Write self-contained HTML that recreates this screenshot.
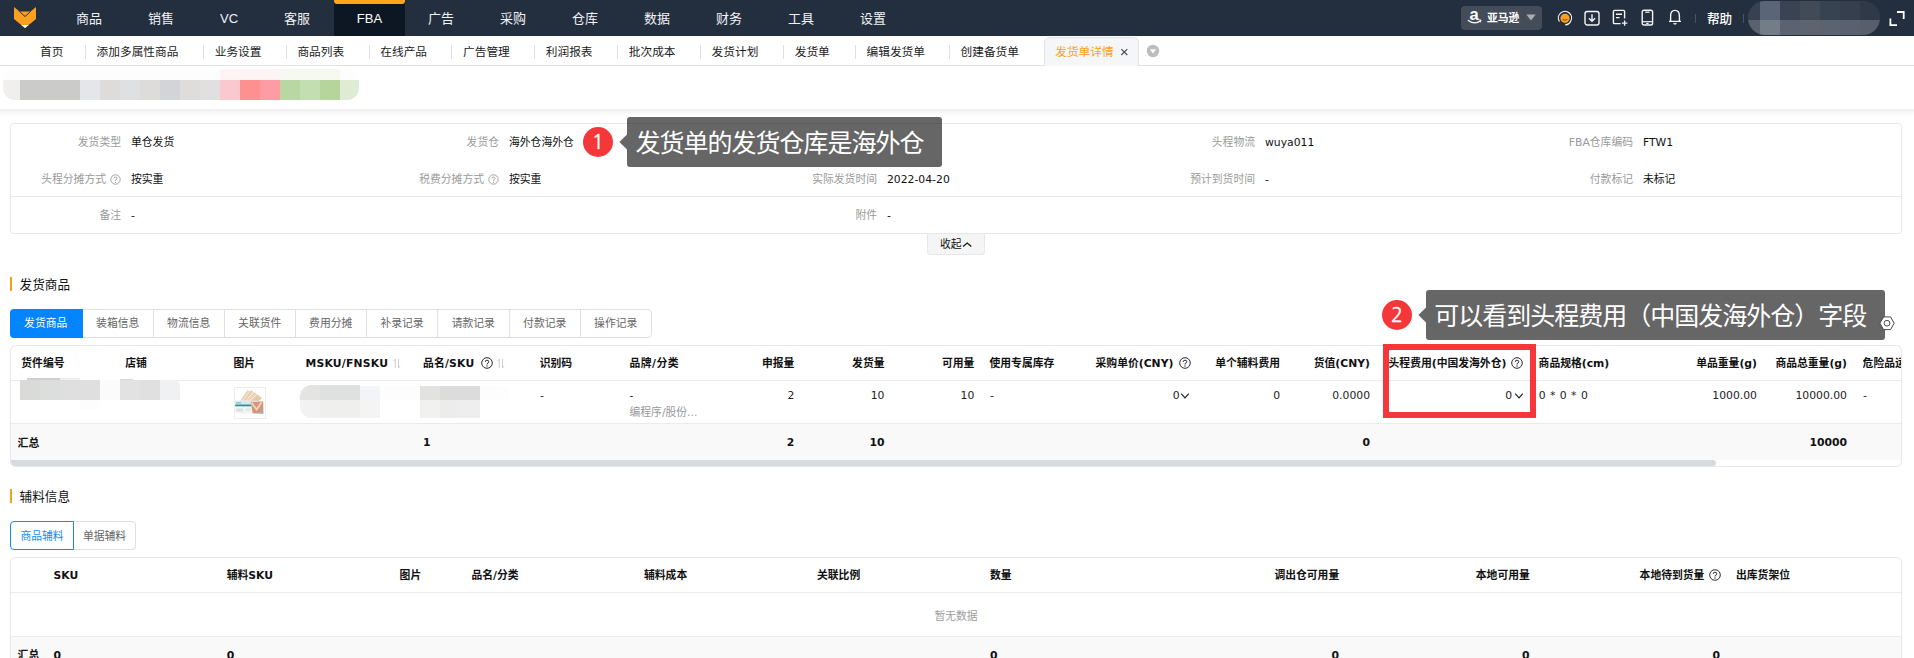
<!DOCTYPE html>
<html lang="zh-CN">
<head>
<meta charset="utf-8">
<title>发货单详情</title>
<style>
*{box-sizing:border-box;margin:0;padding:0}
html,body{width:1914px;height:658px;overflow:hidden;background:#fff}
body{font-family:"Liberation Sans","Noto Sans CJK SC",sans-serif;color:#111;position:relative}
#app{position:absolute;left:0;top:0;width:1914px;height:658px;overflow:hidden;background:#fff}
.a{position:absolute}
.t{position:absolute;white-space:nowrap;height:20px;line-height:20px}
.r{text-align:right}
.v{font-family:"DejaVu Sans","Noto Sans CJK SC",sans-serif}
/* top nav */
#nav{position:absolute;left:0;top:0;width:1914px;height:36px;background:#232e3f}
#nav .m{position:absolute;top:0;height:36px;line-height:37px;text-align:center;color:#f2f3f5;font-size:13px;width:72px}
#nav .m.on{background:#0d1723;color:#fff}
#nav .m.on:before{content:"";position:absolute;left:0;top:0;width:100%;height:4px;background:#fea41f;border-radius:0 0 3px 3px}
/* tab bar */
#tabs{position:absolute;left:0;top:36px;width:1914px;height:30px;background:#fff;border-bottom:1px solid #dfe2e8}
#tabs .t{font-size:11.7px;top:6px;color:#1a1a1a}
#tabs .s{position:absolute;top:8.5px;width:1px;height:14px;background:#dcdfe6}
/* info card */
.lb,.vl,.h,.d{font-family:"DejaVu Sans","Noto Sans CJK SC",sans-serif}
.lb{font-size:10.8px;color:#9a9a9a;text-align:right}
.vl{font-size:10.8px;color:#111}
.h{font-size:10.8px;font-weight:bold;color:#111}
.d{font-size:10.8px;color:#222}
.st{top:310px;width:1px;height:27px;background:#dcdfe6}
.sb{top:313px;width:71px;margin-left:-.8px;text-align:center;font-size:10.8px;color:#666}
.tip{height:49.6px;border-radius:3px;background:rgba(0,0,0,.6);color:#fff;font-size:25px;letter-spacing:-1px;line-height:52.5px;white-space:nowrap;overflow:hidden}
.card{position:absolute;border:1px solid #e4e7ed;border-radius:3.5px;background:#fff}
</style>
</head>
<body>
<div id="app">

<!-- ===== top navigation ===== -->
<div id="nav">
  <svg class="a" style="left:13px;top:6px" width="24" height="24" viewBox="0 0 24 24">
    <path d="M1 1 L6.5 5.5 L17.5 5.5 L23 1 L23 13 L12 22 L1 13 Z" fill="#f9a01e"/>
    <path d="M6.5 5.5 L12 10.5 L17.5 5.5" fill="none" stroke="#232e3f" stroke-width="1"/>
    <path d="M8.2 18.9 L12 22 L15.8 18.9 Z" fill="#fff"/>
  </svg>
  <div class="m" style="left:53px">商品</div>
  <div class="m" style="left:125px">销售</div>
  <div class="m" style="left:197px;width:64px">VC</div>
  <div class="m" style="left:261px">客服</div>
  <div class="m on" style="left:334px;width:71px">FBA</div>
  <div class="m" style="left:405px">广告</div>
  <div class="m" style="left:477px">采购</div>
  <div class="m" style="left:549px">仓库</div>
  <div class="m" style="left:621px">数据</div>
  <div class="m" style="left:693px">财务</div>
  <div class="m" style="left:765px">工具</div>
  <div class="m" style="left:837px">设置</div>
  <div class="a" style="left:1461px;top:6px;width:81px;height:24px;background:#444c59;border-radius:4px"></div>
  <div class="a" style="left:1469.5px;top:4px;width:12px;height:20px;line-height:20px;font-size:16.5px;font-weight:bold;color:#fff;font-family:'Liberation Sans',sans-serif">a</div>
  <svg class="a" style="left:1467px;top:18px" width="16" height="8" viewBox="0 0 16 8">
    <path d="M1.3 2.4 Q7.4 7 13.4 2.9" fill="none" stroke="#fff" stroke-width="1.2" stroke-linecap="round"/>
    <path d="M11.6 1.9 L14 2 L13.4 4.4" fill="none" stroke="#fff" stroke-width="0.9"/>
  </svg>
  <div class="t" style="left:1487px;top:8px;font-size:10.8px;color:#fff;font-weight:bold">亚马逊</div>
  <svg class="a" style="left:1526px;top:14px" width="10" height="7" viewBox="0 0 10 7"><path d="M0.3 0.6 L9.7 0.6 L5 6.6 Z" fill="#a9acb2"/></svg>
  <!-- headset -->
  <svg class="a" style="left:1556px;top:9px" width="18" height="18" viewBox="0 0 18 18">
    <path d="M3.2 12.2 A6.6 6.6 0 1 1 14.6 12.4 Q13 15.6 9.6 15.8" fill="none" stroke="#f4f5f7" stroke-width="1.2" stroke-linecap="round"/>
    <circle cx="9" cy="9.3" r="4.6" fill="#f9a01e"/>
    <path d="M7 10.6 Q9 12.2 11 10.6" fill="none" stroke="#6b4a12" stroke-width="0.9" stroke-linecap="round"/>
  </svg>
  <!-- download -->
  <svg class="a" style="left:1584px;top:10px" width="16" height="16" viewBox="0 0 16 16">
    <rect x="1" y="1.5" width="14" height="13.5" rx="2.2" fill="none" stroke="#f4f5f7" stroke-width="1.4"/>
    <path d="M8 4.2 V11 M4.9 8.2 L8 11.3 L11.1 8.2" fill="none" stroke="#f4f5f7" stroke-width="1.4"/>
  </svg>
  <!-- doc plus -->
  <svg class="a" style="left:1612px;top:9px" width="17" height="18" viewBox="0 0 17 18">
    <path d="M12.6 9.5 V2.6 Q12.6 1.4 11.4 1.4 H2.6 Q1.4 1.4 1.4 2.6 V13.4 Q1.4 14.6 2.6 14.6 H8.6" fill="none" stroke="#f4f5f7" stroke-width="1.4"/>
    <path d="M4 5.3 H10 M4 8.6 H7.6" stroke="#f4f5f7" stroke-width="1.4" fill="none"/>
    <path d="M12.6 11.4 V16.8 M9.9 14.1 H15.3" stroke="#f4f5f7" stroke-width="1.3" fill="none"/>
  </svg>
  <!-- phone -->
  <svg class="a" style="left:1641px;top:9px" width="13" height="18" viewBox="0 0 13 18">
    <rect x="1.2" y="1.2" width="10.4" height="14.8" rx="1.8" fill="none" stroke="#f4f5f7" stroke-width="1.4"/>
    <path d="M1.2 12.7 H11.6" stroke="#f4f5f7" stroke-width="1.2"/>
    <path d="M4.2 3.2 H8.6" stroke="#f4f5f7" stroke-width="1.2"/>
    <path d="M5.2 14.5 H7.6" stroke="#f4f5f7" stroke-width="1.2"/>
  </svg>
  <!-- bell -->
  <svg class="a" style="left:1668px;top:7.8px" width="14" height="18" viewBox="0 0 14 18">
    <path d="M2.6 13.2 V8 Q2.6 2.4 7 2.4 Q11.4 2.4 11.4 8 V13.2 M1 13.4 H13" fill="none" stroke="#f4f5f7" stroke-width="1.4" stroke-linejoin="round"/>
    <path d="M5.6 15.2 Q7 16.6 8.4 15.2" fill="none" stroke="#f4f5f7" stroke-width="1.3"/>
  </svg>
  <div class="a" style="left:1695px;top:14px;width:1px;height:9px;background:#4a5362"></div>
  <div class="t" style="left:1707px;top:8.5px;font-size:12.6px;color:#fff;font-weight:500">帮助</div>
  <div class="a" style="left:1743px;top:14px;width:1px;height:9px;background:#4a5362"></div>
  <!-- blurred user -->
  <div class="a" style="left:1748px;top:1px;width:132px;height:34px;border-radius:17px;overflow:hidden;background:#3a4352">
    <div class="a" style="left:0;top:0;width:12px;height:19px;background:#37414f"></div>
    <div class="a" style="left:12px;top:0;width:20px;height:19px;background:#5a6677"></div>
    <div class="a" style="left:32px;top:0;width:20px;height:19px;background:#3a4352"></div>
    <div class="a" style="left:52px;top:0;width:20px;height:19px;background:#414a55"></div>
    <div class="a" style="left:72px;top:0;width:20px;height:19px;background:#384352"></div>
    <div class="a" style="left:92px;top:0;width:20px;height:19px;background:#353f4e"></div>
    <div class="a" style="left:112px;top:0;width:20px;height:19px;background:#2f3948"></div>
    <div class="a" style="left:0;top:19px;width:12px;height:15px;background:#5a6270"></div>
    <div class="a" style="left:12px;top:19px;width:20px;height:15px;background:#737d88"></div>
    <div class="a" style="left:32px;top:19px;width:20px;height:15px;background:#5c6370"></div>
    <div class="a" style="left:52px;top:19px;width:20px;height:15px;background:#5d6470"></div>
    <div class="a" style="left:72px;top:19px;width:20px;height:15px;background:#5b6370"></div>
    <div class="a" style="left:92px;top:19px;width:20px;height:15px;background:#596170"></div>
    <div class="a" style="left:112px;top:19px;width:20px;height:15px;background:#575f6c"></div>
  </div>
  <!-- fullscreen -->
  <svg class="a" style="left:1889px;top:10px" width="17" height="17" viewBox="0 0 17 17">
    <path d="M8 2 H14.7 V9" fill="none" stroke="#fff" stroke-width="1.8"/>
    <path d="M1.4 8.6 V15.1 H8" fill="none" stroke="#fff" stroke-width="1.8"/>
  </svg>
</div>

<!-- ===== page tabs ===== -->
<div id="tabs">
  <div class="t" style="left:40px">首页</div>
  <div class="s" style="left:85px"></div>
  <div class="t" style="left:96.6px">添加多属性商品</div>
  <div class="s" style="left:203px"></div>
  <div class="t" style="left:214.7px">业务设置</div>
  <div class="s" style="left:286px"></div>
  <div class="t" style="left:297.4px">商品列表</div>
  <div class="s" style="left:369px"></div>
  <div class="t" style="left:380.3px">在线产品</div>
  <div class="s" style="left:451px"></div>
  <div class="t" style="left:463px">广告管理</div>
  <div class="s" style="left:534px"></div>
  <div class="t" style="left:545.8px">利润报表</div>
  <div class="s" style="left:617px"></div>
  <div class="t" style="left:628.8px">批次成本</div>
  <div class="s" style="left:700px"></div>
  <div class="t" style="left:711.6px">发货计划</div>
  <div class="s" style="left:783px"></div>
  <div class="t" style="left:794.7px">发货单</div>
  <div class="s" style="left:855px"></div>
  <div class="t" style="left:866.5px">编辑发货单</div>
  <div class="s" style="left:949px"></div>
  <div class="t" style="left:960.5px">创建备货单</div>
  <div class="a" style="left:1044px;top:1px;width:95px;height:29px;background:#f5f6f8;border:1px solid #e0e3e8;border-bottom:none;border-radius:5.5px 5.5px 0 0"></div>
  <div class="t" style="left:1055.2px;color:#ff9f16">发货单详情</div>
  <svg class="a" style="left:1120px;top:12px" width="9" height="9" viewBox="0 0 9 9"><path d="M1.3 1.2 L7.3 7 M7.3 1.2 L1.3 7" stroke="#4a4a55" stroke-width="1.15"/></svg>
  <svg class="a" style="left:1146px;top:8px" width="14" height="14" viewBox="0 0 14 14"><circle cx="7" cy="7" r="6.2" fill="#bdbdbd"/><path d="M3.9 5.3 H10.1 L7 9.6 Z" fill="#fff"/></svg>
</div>

<!-- ===== page header (blurred title) ===== -->
<div class="a" style="left:0;top:109px;width:1914px;height:8px;background:linear-gradient(to bottom,#ededed 0%,#f6f6f6 35%,#fcfcfc 70%,#fff 100%)"></div>
<div class="a" style="left:3px;top:69px;width:356px;height:31px;border-radius:12px;overflow:hidden;background:#fdfdfd">
  <div class="a" style="left:217px;top:0;width:60px;height:11px;background:#fef4f5"></div>
  <div class="a" style="left:277px;top:0;width:60px;height:11px;background:#f5f9f2"></div>
  <div class="a" style="left:0;top:11px;width:17px;height:20px;background:#f0efed"></div>
  <div class="a" style="left:17px;top:11px;width:60px;height:20px;background:#cbcbca"></div>
  <div class="a" style="left:77px;top:11px;width:20px;height:20px;background:#e4e6e9"></div>
  <div class="a" style="left:97px;top:11px;width:20px;height:20px;background:#dddcda"></div>
  <div class="a" style="left:117px;top:11px;width:20px;height:20px;background:#dfe0e2"></div>
  <div class="a" style="left:137px;top:11px;width:20px;height:20px;background:#dddcda"></div>
  <div class="a" style="left:157px;top:11px;width:20px;height:20px;background:#d2d4d7"></div>
  <div class="a" style="left:177px;top:11px;width:20px;height:20px;background:#dedddb"></div>
  <div class="a" style="left:197px;top:11px;width:20px;height:20px;background:#dfe0df"></div>
  <div class="a" style="left:217px;top:11px;width:20px;height:20px;background:#f9c9cf"></div>
  <div class="a" style="left:237px;top:11px;width:20px;height:20px;background:#fe9092"></div>
  <div class="a" style="left:257px;top:11px;width:20px;height:20px;background:#fd9ca3"></div>
  <div class="a" style="left:277px;top:11px;width:20px;height:20px;background:#b9d7a3"></div>
  <div class="a" style="left:297px;top:11px;width:20px;height:20px;background:#c3deb0"></div>
  <div class="a" style="left:317px;top:11px;width:20px;height:20px;background:#b5d59d"></div>
  <div class="a" style="left:337px;top:11px;width:19px;height:20px;background:#dfecd3"></div>
</div>

<!-- ===== info card ===== -->
<div class="card" style="left:10px;top:123px;width:1892px;height:111px"></div>
<div class="a" style="left:11px;top:196px;width:1890px;height:1px;background:#e4e7ed"></div>

<div class="t lb" style="left:21px;width:100px;top:133.4px">发货类型</div>
<div class="t vl" style="left:131px;top:133.4px">单仓发货</div>
<div class="t lb" style="left:399px;width:100px;top:133.4px">发货仓</div>
<div class="t vl" style="left:509px;top:133.4px">海外仓海外仓</div>
<div class="t lb" style="left:1155px;width:100px;top:133.4px">头程物流</div>
<div class="t vl v" style="left:1265px;top:133.4px">wuya011</div>
<div class="t lb" style="left:1533px;width:100px;top:133.4px">FBA仓库编码</div>
<div class="t vl v" style="left:1643px;top:133.4px">FTW1</div>

<div class="t lb" style="left:6px;width:100px;top:170px">头程分摊方式</div>
<svg class="a q" style="left:109.5px;top:173.7px" width="11" height="11" viewBox="0 0 11 11"><circle cx="5.5" cy="5.5" r="4.7" fill="none" stroke="#9a9a9a" stroke-width=".9"/><path d="M3.9 4.5 Q3.9 3 5.5 3 Q7.1 3 7.1 4.4 Q7.1 5.3 5.5 6.1 V6.8" fill="none" stroke="#9a9a9a" stroke-width=".9"/><circle cx="5.5" cy="8.2" r=".6" fill="#9a9a9a"/></svg>
<div class="t vl" style="left:131px;top:170px">按实重</div>
<div class="t lb" style="left:384px;width:100px;top:170px">税费分摊方式</div>
<svg class="a q" style="left:487.5px;top:173.7px" width="11" height="11" viewBox="0 0 11 11"><circle cx="5.5" cy="5.5" r="4.7" fill="none" stroke="#9a9a9a" stroke-width=".9"/><path d="M3.9 4.5 Q3.9 3 5.5 3 Q7.1 3 7.1 4.4 Q7.1 5.3 5.5 6.1 V6.8" fill="none" stroke="#9a9a9a" stroke-width=".9"/><circle cx="5.5" cy="8.2" r=".6" fill="#9a9a9a"/></svg>
<div class="t vl" style="left:509px;top:170px">按实重</div>
<div class="t lb" style="left:777px;width:100px;top:170px">实际发货时间</div>
<div class="t vl v" style="left:887px;top:170px">2022-04-20</div>
<div class="t lb" style="left:1155px;width:100px;top:170px">预计到货时间</div>
<div class="t vl v" style="left:1265px;top:170px">-</div>
<div class="t lb" style="left:1533px;width:100px;top:170px">付款标记</div>
<div class="t vl" style="left:1643px;top:170px">未标记</div>

<div class="t lb" style="left:21px;width:100px;top:206.2px">备注</div>
<div class="t vl v" style="left:131px;top:206.2px">-</div>
<div class="t lb" style="left:777px;width:100px;top:206.2px">附件</div>
<div class="t vl v" style="left:887px;top:206.2px">-</div>

<!-- collapse button -->
<div class="a" style="left:927px;top:234px;width:58px;height:21px;background:#f5f5f5;border:1px solid #e4e7ed;border-top:none;border-radius:0 0 4px 4px"></div>
<div class="t" style="left:940px;top:234px;font-size:10.8px;color:#111">收起</div>
<svg class="a" style="left:962px;top:239.2px" width="11" height="9" viewBox="0 0 11 9"><path d="M1.1 7.5 L5.2 4 L9.3 7.5" fill="none" stroke="#111" stroke-width="1.2"/></svg>

<!-- annotation 1 -->
<div class="a" style="left:583px;top:127px;width:30px;height:30px;border-radius:15px;background:#f5373a;color:#fff;font-size:19.6px;line-height:30px;text-align:center;font-family:NanumGothic,'Liberation Sans',sans-serif;-webkit-text-stroke:.35px #fff">1</div>
<svg class="a" style="left:619px;top:133px" width="8" height="18" viewBox="0 0 8 18"><path d="M8 1.5 L0.4 9 L8 16.5 Z" fill="rgba(0,0,0,.6)"/></svg>
<div class="a tip" style="left:627px;top:117px;width:315px;padding-left:8.4px">发货单的发货仓库是海外仓</div>

<!-- ===== section: 发货商品 ===== -->
<div class="a" style="left:10px;top:277px;width:2px;height:14px;background:#f9a01e"></div>
<div class="t" style="left:19.6px;top:274.7px;font-size:12.6px;color:#111">发货商品</div>

<!-- sub tabs -->
<div class="a" style="left:10px;top:309px;width:642px;height:29px;border:1px solid #dcdfe6;border-radius:4px;background:#fff"></div>
<div class="a" style="left:10px;top:309px;width:73px;height:29px;background:#0584ff;border-radius:4px 0 0 4px"></div>
<div class="a st" style="left:153px"></div><div class="a st" style="left:224px"></div><div class="a st" style="left:295px"></div><div class="a st" style="left:366px"></div><div class="a st" style="left:437.4px"></div><div class="a st" style="left:509px"></div><div class="a st" style="left:580px"></div>
<div class="t sb" style="left:10px;width:73px;color:#fff">发货商品</div>
<div class="t sb" style="left:83px">装箱信息</div>
<div class="t sb" style="left:154px">物流信息</div>
<div class="t sb" style="left:225px">关联货件</div>
<div class="t sb" style="left:296px">费用分摊</div>
<div class="t sb" style="left:367.3px">补录记录</div>
<div class="t sb" style="left:438.6px">请款记录</div>
<div class="t sb" style="left:510px">付款记录</div>
<div class="t sb" style="left:581px">操作记录</div>


<!-- table 1 -->
<div class="card" style="left:10px;top:345px;width:1892px;height:122px;overflow:hidden;border-radius:5.5px">
  <div class="a" style="left:0;top:34px;width:1892px;height:1px;background:#ebebed"></div>
  <div class="a" style="left:0;top:77px;width:1892px;height:1px;background:#ebebed"></div>
  <div class="a" style="left:0;top:78px;width:1892px;height:36px;background:#f9f9f9"></div>
  
  <div class="a" style="left:0;top:114px;width:1705px;height:6.4px;background:#d9dade;border-radius:0 3.2px 3.2px 0"></div>
</div>
<!-- header -->
<div class="t h" style="left:21.3px;top:354px">货件编号</div>
<div class="t h" style="left:125.3px;top:354px">店铺</div>
<div class="t h" style="left:233.5px;top:354px">图片</div>
<div class="t h v" style="left:305.5px;top:354px;letter-spacing:.22px">MSKU/FNSKU</div>
<div class="t h v" style="left:422.9px;top:354px;letter-spacing:.2px">品名/SKU</div>
<div class="t h" style="left:539.7px;top:354px">识别码</div>
<div class="t h v" style="left:629.4px;top:354px;letter-spacing:.5px">品牌/分类</div>
<div class="t h r" style="left:694.3px;width:100px;top:354px">申报量</div>
<div class="t h r" style="left:784.5px;width:100px;top:354px">发货量</div>
<div class="t h r" style="left:874.3px;width:100px;top:354px">可用量</div>
<div class="t h" style="left:989.5px;top:354px">使用专属库存</div>
<div class="t h v r" style="left:1073.4px;width:100px;top:354px">采购单价(CNY)</div>
<div class="t h r" style="left:1180px;width:100px;top:354px">单个辅料费用</div>
<div class="t h v r" style="left:1270px;width:100px;top:354px">货值(CNY)</div>
<div class="t h v r" style="left:1346.4px;width:160px;top:354px">头程费用(中国发海外仓)</div>
<div class="t h v" style="left:1538.6px;top:354px">商品规格(cm)</div>
<div class="t h v r" style="left:1657px;width:100px;top:354px">单品重量(g)</div>
<div class="t h v r" style="left:1747px;width:100px;top:354px">商品总重量(g)</div>
<div class="t h" style="left:1862.6px;top:354px;width:38px;overflow:hidden">危险品运输</div>
<!-- data row -->
<div class="t d v" style="left:540px;top:386px">-</div>
<div class="t d v" style="left:629.5px;top:386px">-</div>
<div class="t d v" style="left:629.5px;top:402.5px;color:#999">编程序/股份...</div>
<div class="t d v r" style="left:694.3px;width:100px;top:386px">2</div>
<div class="t d v r" style="left:784.5px;width:100px;top:386px">10</div>
<div class="t d v r" style="left:874.3px;width:100px;top:386px">10</div>
<div class="t d v" style="left:990px;top:386px">-</div>
<div class="t d v r" style="left:1079.6px;width:100px;top:386px">0</div>
<div class="t d v r" style="left:1180px;width:100px;top:386px">0</div>
<div class="t d v r" style="left:1270px;width:100px;top:386px">0.0000</div>
<div class="t d v r" style="left:1412px;width:100px;top:386px">0</div>
<div class="t d v" style="left:1538.7px;top:386px;word-spacing:1px">0 * 0 * 0</div>
<div class="t d v r" style="left:1657px;width:100px;top:386px">1000.00</div>
<div class="t d v r" style="left:1747px;width:100px;top:386px">10000.00</div>
<div class="t d v" style="left:1863px;top:386px">-</div>
<!-- footer row -->
<div class="t h" style="left:17.6px;top:434px">汇总</div>
<div class="t h v" style="left:423px;top:433px">1</div>
<div class="t h v r" style="left:694.3px;width:100px;top:433px">2</div>
<div class="t h v r" style="left:784.5px;width:100px;top:433px">10</div>
<div class="t h v r" style="left:1270px;width:100px;top:433px">0</div>
<div class="t h v r" style="left:1747px;width:100px;top:433px">10000</div>

<!-- annotation 2 -->
<div class="a" style="left:1383px;top:344px;width:153px;height:74px;border:6.5px solid #f5363b"></div>
<div class="a" style="left:1382px;top:300px;width:30px;height:30px;border-radius:15px;background:#f5373a;color:#fff;font-size:19.6px;line-height:30px;text-align:center;font-family:NanumGothic,'Liberation Sans',sans-serif;-webkit-text-stroke:.35px #fff">2</div>
<svg class="a" style="left:1418px;top:306px" width="8" height="18" viewBox="0 0 8 18"><path d="M8 1.5 L0.4 9 L8 16.5 Z" fill="rgba(0,0,0,.6)"/></svg>
<div class="a tip" style="left:1426px;top:290px;width:459px;padding-left:8.2px">可以看到头程费用（中国发海外仓）字段</div>

<!-- gear icon -->
<svg class="a" style="left:1878px;top:315px" width="18" height="17" viewBox="0 0 18 17"><path d="M1.9 8.2 L5.6 1.9 H12.6 L16.2 8.2 L12.6 14.6 H5.6 Z" fill="#fff" stroke="#4a4a52" stroke-width="1"/><circle cx="9" cy="8.2" r="2.9" fill="#fff" stroke="#4a4a52" stroke-width="1"/></svg>

<!-- ===== section: 辅料信息 ===== -->
<div class="a" style="left:10px;top:489px;width:2px;height:14px;background:#f9a01e"></div>
<div class="t" style="left:19.6px;top:486.7px;font-size:12.6px;color:#111">辅料信息</div>
<div class="a" style="left:73px;top:521px;width:63px;height:29px;border:1px solid #dcdfe6;border-left:none;border-radius:0 4px 4px 0;background:#fff"></div>
<div class="a" style="left:10px;top:521px;width:64px;height:29px;border:1px solid #1989fa;border-radius:4px 0 0 4px;background:#fff"></div>
<div class="t" style="left:10px;width:64px;top:525.5px;font-size:10.8px;color:#1989fa;text-align:center">商品辅料</div>
<div class="t" style="left:73px;width:63px;top:525.5px;font-size:10.8px;color:#666;text-align:center">单据辅料</div>

<!-- table 2 -->
<div class="card" style="left:10px;top:557px;width:1892px;height:120px;overflow:hidden;border-radius:5.5px">
  <div class="a" style="left:0;top:34px;width:1892px;height:1px;background:#ebebed"></div>
  <div class="a" style="left:0;top:78px;width:1892px;height:1px;background:#ebebed"></div>
  <div class="a" style="left:0;top:79px;width:1892px;height:40px;background:#f9f9f9"></div>
</div>
<div class="t h v" style="left:53.6px;top:566px">SKU</div>
<div class="t h v" style="left:226.7px;top:566px">辅料SKU</div>
<div class="t h" style="left:399.6px;top:566px">图片</div>
<div class="t h v" style="left:471.5px;top:566px">品名/分类</div>
<div class="t h" style="left:644px;top:566px">辅料成本</div>
<div class="t h" style="left:817px;top:566px">关联比例</div>
<div class="t h" style="left:990px;top:566px">数量</div>
<div class="t h r" style="left:1239.2px;width:100px;top:566px">调出仓可用量</div>
<div class="t h r" style="left:1429.8px;width:100px;top:566px">本地可用量</div>
<div class="t h r" style="left:1604.4px;width:100px;top:566px">本地待到货量</div>
<div class="t h" style="left:1736px;top:566px">出库货架位</div>
<div class="t" style="left:906px;width:100px;text-align:center;top:605.6px;font-size:10.8px;color:#9c9c9c">暂无数据</div>
<div class="t h" style="left:17.6px;top:645.5px">汇总</div>
<div class="t h v" style="left:53.6px;top:645.5px">0</div>
<div class="t h v" style="left:226.7px;top:645.5px">0</div>
<div class="t h v" style="left:990px;top:645.5px">0</div>
<div class="t h v r" style="left:1239px;width:100px;top:645.5px">0</div>
<div class="t h v r" style="left:1429.5px;width:100px;top:645.5px">0</div>
<div class="t h v r" style="left:1620px;width:100px;top:645.5px">0</div>

<!-- icons in table header -->
<svg class="a" style="left:393px;top:358px" width="8" height="11" viewBox="0 0 8 11"><path d="M2.3 10 V1.2 L0.6 3.2" fill="none" stroke="#c8c8c8" stroke-width=".9"/><path d="M5.5 1 V9.8 L7.3 7.8" fill="none" stroke="#c8c8c8" stroke-width=".9"/></svg>
<svg class="a" style="left:497px;top:358px" width="8" height="11" viewBox="0 0 8 11"><path d="M2.3 10 V1.2 L0.6 3.2" fill="none" stroke="#c8c8c8" stroke-width=".9"/><path d="M5.5 1 V9.8 L7.3 7.8" fill="none" stroke="#c8c8c8" stroke-width=".9"/></svg>
<svg class="a" style="left:480.5px;top:357px" width="12" height="12" viewBox="0 0 12 12"><circle cx="6" cy="6" r="5.3" fill="none" stroke="#2b2b38" stroke-width="1"/><path d="M4.2 4.9 Q4.2 3.2 6 3.2 Q7.8 3.2 7.8 4.8 Q7.8 5.8 6 6.7 V7.5" fill="none" stroke="#2b2b38" stroke-width="1"/><circle cx="6" cy="9" r=".7" fill="#2b2b38"/></svg>
<svg class="a" style="left:1178.5px;top:357px" width="12" height="12" viewBox="0 0 12 12"><circle cx="6" cy="6" r="5.3" fill="none" stroke="#2b2b38" stroke-width="1"/><path d="M4.2 4.9 Q4.2 3.2 6 3.2 Q7.8 3.2 7.8 4.8 Q7.8 5.8 6 6.7 V7.5" fill="none" stroke="#2b2b38" stroke-width="1"/><circle cx="6" cy="9" r=".7" fill="#2b2b38"/></svg>
<svg class="a" style="left:1511.2px;top:357px" width="12" height="12" viewBox="0 0 12 12"><circle cx="6" cy="6" r="5.3" fill="none" stroke="#2b2b38" stroke-width="1"/><path d="M4.2 4.9 Q4.2 3.2 6 3.2 Q7.8 3.2 7.8 4.8 Q7.8 5.8 6 6.7 V7.5" fill="none" stroke="#2b2b38" stroke-width="1"/><circle cx="6" cy="9" r=".7" fill="#2b2b38"/></svg>
<svg class="a" style="left:1708.5px;top:569px" width="12" height="12" viewBox="0 0 12 12"><circle cx="6" cy="6" r="5.3" fill="none" stroke="#2b2b38" stroke-width="1"/><path d="M4.2 4.9 Q4.2 3.2 6 3.2 Q7.8 3.2 7.8 4.8 Q7.8 5.8 6 6.7 V7.5" fill="none" stroke="#2b2b38" stroke-width="1"/><circle cx="6" cy="9" r=".7" fill="#2b2b38"/></svg>
<!-- chevrons -->
<svg class="a" style="left:1180px;top:392px" width="10" height="8" viewBox="0 0 10 8"><path d="M1.2 1.6 L5 5.8 L8.8 1.6" fill="none" stroke="#1c1c22" stroke-width="1.15"/></svg>
<svg class="a" style="left:1513.5px;top:392px" width="10" height="8" viewBox="0 0 10 8"><path d="M1.2 1.6 L5 5.8 L8.8 1.6" fill="none" stroke="#1c1c22" stroke-width="1.15"/></svg>

<!-- blurred cells -->
<div class="a" style="left:27px;top:378px;width:33px;height:3px;background:#cfcfcf"></div>
<div class="a" style="left:60px;top:378px;width:20px;height:3px;background:#efefef"></div>
<div class="a" style="left:120px;top:379px;width:13px;height:2px;background:#d8d8d8"></div>
<div class="a" style="left:20px;top:380px;width:20px;height:20px;background:#dadad8"></div>
<div class="a" style="left:40px;top:380px;width:20px;height:20px;background:#dcdedd"></div>
<div class="a" style="left:60px;top:380px;width:40px;height:20px;background:#dfdfdf"></div>
<div class="a" style="left:100px;top:380px;width:20px;height:20px;background:#fbfbfb"></div>
<div class="a" style="left:120px;top:380px;width:20px;height:20px;background:#e2e2e2"></div>
<div class="a" style="left:140px;top:380px;width:20px;height:20px;background:#e0e0e0"></div>
<div class="a" style="left:160px;top:380px;width:20px;height:20px;background:#f0f1f3;border-radius:0 6px 0 0"></div>
<div class="a" style="left:80px;top:400px;width:20px;height:10px;background:#fdfdfd"></div>
<div class="a" style="left:300px;top:385px;width:80px;height:33px;border-radius:12px 0 0 12px;overflow:hidden;background:#efefee">
  <div class="a" style="left:0;top:0;width:20px;height:15px;background:#e4e4e2"></div>
  <div class="a" style="left:20px;top:0;width:40px;height:15px;background:#dfe0e0"></div>
  <div class="a" style="left:60px;top:1px;width:20px;height:14px;background:#f2f4f7"></div>
  <div class="a" style="left:60px;top:0;width:20px;height:1px;background:#fff"></div>
  <div class="a" style="left:0;top:15px;width:20px;height:18px;background:#f2f2f2"></div>
  <div class="a" style="left:60px;top:15px;width:20px;height:18px;background:#f4f4f4"></div>
</div>
<div class="a" style="left:380px;top:386px;width:40px;height:14px;background:#fdfdfd"></div>
<div class="a" style="left:420px;top:386px;width:20px;height:14px;background:#e2e2e0"></div>
<div class="a" style="left:440px;top:386px;width:40px;height:14px;background:#dcdcdc"></div>
<div class="a" style="left:420px;top:400px;width:20px;height:18px;background:#f1f1ef"></div>
<div class="a" style="left:440px;top:400px;width:20px;height:18px;background:#ececec"></div>
<div class="a" style="left:460px;top:400px;width:20px;height:18px;background:#eeeeee"></div>
<div class="a" style="left:480px;top:386px;width:30px;height:14px;background:#fcfdfc;border-radius:0 12px 0 0"></div>

<!-- thumbnail -->
<svg class="a" style="left:234px;top:387px" width="32" height="32" viewBox="0 0 32 32">
  <rect x=".5" y=".5" width="31" height="31" fill="#fff" stroke="#ececec"/>
  <polygon points="6.2,13.8 13.6,3 15.6,4.2 8.6,13.8" fill="#ead3b6"/>
  <polygon points="9,13.8 16.8,3.2 19.2,4.8 11.8,13.8" fill="#e8ceae"/>
  <polygon points="12.2,13.8 20,4.9 22.8,7 15.4,13.8" fill="#ead3b6"/>
  <polygon points="15.8,14 23.2,7.3 28,11 24.2,14.8" fill="#e6c9a8"/>
  <rect x="1.2" y="13.8" width="27.8" height="13" fill="#f3f5f5"/>
  <rect x="1.2" y="13.8" width="15.8" height="3.6" fill="#d3eaec"/>
  <rect x="2" y="15.2" width="5" height="1.4" fill="#8cc4ca"/>
  <rect x="1.2" y="17.5" width="15.8" height="1.8" fill="#2f8d97"/>
  <rect x="2.2" y="21.4" width="7" height="3.2" fill="#dde1e2"/>
  <rect x="12" y="21.4" width="4.4" height="2.2" fill="#e9e5d8"/>
  <path d="M16.6 14.8 L29.2 14.4 L29.4 24.6 Q25 27 18.6 26 Z" fill="#d4957a"/>
  <path d="M17.4 15.6 L22.6 22.6 L27.6 15.2" fill="none" stroke="#efd3bf" stroke-width="1.8"/>
  <path d="M19.6 26.2 Q25 27.2 29.4 24.2 L29.4 26.8 L19.6 26.8 Z" fill="#7db5bb"/>
</svg>


</div>
</body>
</html>
